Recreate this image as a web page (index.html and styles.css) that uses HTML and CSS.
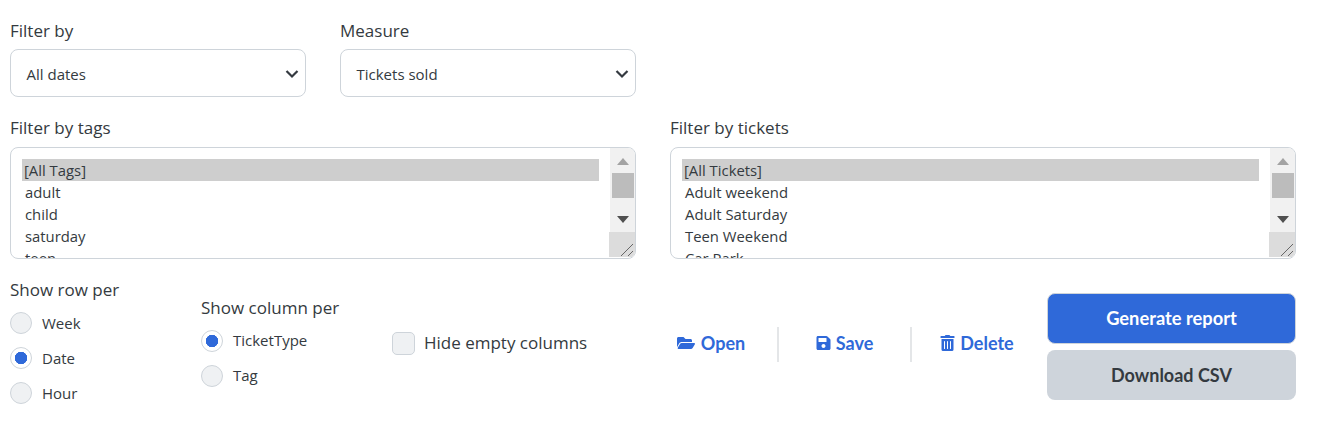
FILE: index.html
```html
<!DOCTYPE html>
<html lang="en">
<head>
<meta charset="utf-8">
<title>Report filters</title>
<link rel="stylesheet" href="styles.css">
</head>
<body>
<main class="page">
  <div class="row-selects">
    <div class="field">
      <label class="label">Filter by</label>
      <div class="select"><span>All dates</span>
        <svg class="chev" viewBox="0 0 14 10"><path d="M1.5 2 7 7.5 12.5 2" fill="none" stroke="#343a40" stroke-width="2.2"/></svg>
      </div>
    </div>
    <div class="field">
      <label class="label">Measure</label>
      <div class="select"><span>Tickets sold</span>
        <svg class="chev" viewBox="0 0 14 10"><path d="M1.5 2 7 7.5 12.5 2" fill="none" stroke="#343a40" stroke-width="2.2"/></svg>
      </div>
    </div>
  </div>
  <div class="row-lists">
    <div class="field">
      <label class="label">Filter by tags</label>
      <div class="list">
        <div class="options">
          <div class="opt sel">[All Tags]</div>
          <div class="opt">adult</div>
          <div class="opt">child</div>
          <div class="opt">saturday</div>
          <div class="opt">teen</div>
        </div>
        <div class="bar">
          <svg class="arrow up" viewBox="0 0 12 7"><path d="M6 0 12 7H0z"/></svg>
          <div class="thumb"></div>
          <svg class="arrow down" viewBox="0 0 12 7"><path d="M0 0H12L6 7z"/></svg>
          <div class="grip"><svg viewBox="0 0 26 25"><path d="M12 24 24 12M19 24 24 19" stroke="#666" fill="none"/></svg></div>
        </div>
      </div>
    </div>
    <div class="field">
      <label class="label">Filter by tickets</label>
      <div class="list">
        <div class="options">
          <div class="opt sel">[All Tickets]</div>
          <div class="opt">Adult weekend</div>
          <div class="opt">Adult Saturday</div>
          <div class="opt">Teen Weekend</div>
          <div class="opt">Car Park</div>
        </div>
        <div class="bar">
          <svg class="arrow up" viewBox="0 0 12 7"><path d="M6 0 12 7H0z"/></svg>
          <div class="thumb"></div>
          <svg class="arrow down" viewBox="0 0 12 7"><path d="M0 0H12L6 7z"/></svg>
          <div class="grip"><svg viewBox="0 0 26 25"><path d="M12 24 24 12M19 24 24 19" stroke="#666" fill="none"/></svg></div>
        </div>
      </div>
    </div>
  </div>
  <div class="row-bottom">
    <div class="group group-row">
      <div class="label">Show row per</div>
      <label class="radio"><input type="radio" name="r"><span>Week</span></label>
      <label class="radio"><input type="radio" name="r" checked><span>Date</span></label>
      <label class="radio"><input type="radio" name="r"><span>Hour</span></label>
    </div>
    <div class="group group-col">
      <div class="label">Show column per</div>
      <label class="radio"><input type="radio" name="c" checked><span>TicketType</span></label>
      <label class="radio"><input type="radio" name="c"><span>Tag</span></label>
    </div>
    <label class="check"><input type="checkbox"><span>Hide empty columns</span></label>
    <div class="actions">
      <a class="action act-open"><svg class="ico ico-open" viewBox="0 0 576 512"><path d="M572.694 292.093 500.27 416.248A63.997 63.997 0 0 1 444.989 448H45.025c-18.523 0-30.064-20.093-20.731-36.093l72.424-124.155A64 64 0 0 1 152 256h399.964c18.523 0 30.064 20.093 20.73 36.093zM152 224h328v-48c0-26.51-21.49-48-48-48H272l-64-64H48C21.49 64 0 85.49 0 112v278.046l69.077-118.418C86.214 242.25 117.989 224 152 224z"/></svg>Open</a>
      <a class="action act-save"><svg class="ico ico-save" viewBox="0 0 448 512"><path d="M433.941 129.941l-83.882-83.882A48 48 0 0 0 316.118 32H48C21.49 32 0 53.49 0 80v352c0 26.51 21.49 48 48 48h352c26.51 0 48-21.49 48-48V163.882a48 48 0 0 0-14.059-33.941zM224 416c-35.346 0-64-28.654-64-64 0-35.346 28.654-64 64-64s64 28.654 64 64c0 35.346-28.654 64-64 64zm96-304.520V212c0 6.627-5.373 12-12 12H76c-6.627 0-12-5.373-12-12V108c0-6.627 5.373-12 12-12h228.520c3.183 0 6.235 1.264 8.485 3.515l3.480 3.480A11.996 11.996 0 0 1 320 111.480z"/></svg>Save</a>
      <a class="action act-delete"><svg class="ico ico-del" viewBox="0 0 448 512"><path d="M32 464a48 48 0 0 0 48 48h288a48 48 0 0 0 48-48V128H32zm272-256a16 16 0 0 1 32 0v224a16 16 0 0 1-32 0zm-96 0a16 16 0 0 1 32 0v224a16 16 0 0 1-32 0zm-96 0a16 16 0 0 1 32 0v224a16 16 0 0 1-32 0zM432 32H312l-9.400-18.700A24 24 0 0 0 281.100 0H166.800a23.720 23.720 0 0 0-21.400 13.300L136 32H16A16 16 0 0 0 0 48v32a16 16 0 0 0 16 16h416a16 16 0 0 0 16-16V48a16 16 0 0 0-16-16z"/></svg>Delete</a>
    </div>
    <div class="buttons">
      <button class="btn primary" type="button">Generate report</button>
      <button class="btn secondary" type="button">Download CSV</button>
    </div>
  </div>
</main>
</body>
</html>
```

FILE: styles.css
```css
* { box-sizing: border-box; }
html, body { margin: 0; background: #fff; }
body { font-family: "Open Sans", "Noto Sans", sans-serif; color: #343a40; }
.page { width: 1317px; height: 428px; padding: 19px 21px 0 10px; overflow: hidden; }
.label { display: block; font-size: 17px; line-height: 24px; color: #343a40; }

.row-selects { display: flex; gap: 34px; }
.row-selects .field { width: 296px; }
.row-selects .label { margin-bottom: 6px; }
.select { position: relative; height: 48px; border: 1px solid #ced4da; border-radius: 8px; padding: 2px 0 0 15.5px; display: flex; align-items: center; font-size: 15px; background: #fff; }
.chev { position: absolute; right: 6px; top: 19px; width: 14px; height: 10px; }

.row-lists { display: flex; gap: 34px; margin-top: 19px; }
.row-lists .field { width: 626px; }
.row-lists .label { margin-bottom: 7px; }
.list { height: 112px; border: 1px solid #ced4da; border-radius: 8px; display: flex; overflow: hidden; position: relative; }
.options { flex: 1; padding: 11px 11px 0 11px; font-size: 14.85px; }
.opt { height: 22px; line-height: 23px; padding-left: 3px; color: #343a40; }
.opt.sel { background: #cecece; padding-left: 2px; }
.bar { width: 25px; background: #f1f1f1; position: relative; flex: none; margin-bottom: 1px; }
.arrow { position: absolute; left: 7px; width: 12px; height: 7px; }
.arrow.up { top: 10px; fill: #a3a3a3; }
.arrow.down { top: 68px; fill: #505050; }
.thumb { position: absolute; left: 2px; right: 1px; top: 25px; height: 25px; background: #bcbcbc; }
.grip { position: absolute; left: -1px; bottom: 0; width: 26px; height: 25px; background: #dcdcdc; }
.grip svg { display: block; width: 26px; height: 25px; }

.row-bottom { display: flex; align-items: center; margin-top: 19px; }
.group { display: flex; flex-direction: column; }
.group-row { width: 191px; }
.group-col { width: 191px; }
.group .label { margin-bottom: 10px; }
.radio { display: flex; align-items: center; height: 22px; font-size: 15px; margin-bottom: 13px; }
.radio:last-child { margin-bottom: 0; }
.radio span { margin-left: 10px; }
.group-col .radio span { padding-bottom: 2px; }
.radio input { appearance: none; margin: 0; width: 22px; height: 22px; border-radius: 50%; border: 1px solid #ced4da; background: #eff1f3; flex: none; }
.radio input:checked { background: radial-gradient(circle, #2f69d9 0 6px, #fff 6.5px); }
.check { display: flex; align-items: center; font-size: 17px; width: 253px; margin-top: 5px; }
.check span { padding-bottom: 2px; }
.check input { appearance: none; margin: 0 9px 0 0; width: 23px; height: 23px; border: 1px solid #ced4da; border-radius: 5px; background: #eff1f3; flex: none; }

.actions { display: flex; align-items: center; width: 402px; margin-top: 6px; }
.action { display: flex; align-items: center; justify-content: center; height: 35px; padding-bottom: 2px; font-family: Lato, sans-serif; font-weight: 700; font-size: 18px; color: #2f69d9; }
.act-open { width: 134px; border-right: 2px solid #e4e6e8; }
.act-save { width: 133px; border-right: 2px solid #e4e6e8; }
.act-delete { width: 135px; padding-right: 5px; }
.ico { height: 16px; fill: currentColor; margin-right: 6px; flex: none; }
.ico-open { width: 18px; }
.ico-save, .ico-del { width: 15px; margin-right: 5px; }

.buttons { display: flex; flex-direction: column; gap: 6px; width: 249px; margin-top: 11px; }
.btn { height: 50px; border: 1px solid transparent; border-radius: 8px; font-family: Lato, sans-serif; font-weight: 700; font-size: 18px; }
.primary { background: #2f69d9; color: #fff; border-color: #ced4da; height: 51px; padding-bottom: 3px; font-size: 18.3px; }
.secondary { background: #ced4db; color: #343a40; }
```
